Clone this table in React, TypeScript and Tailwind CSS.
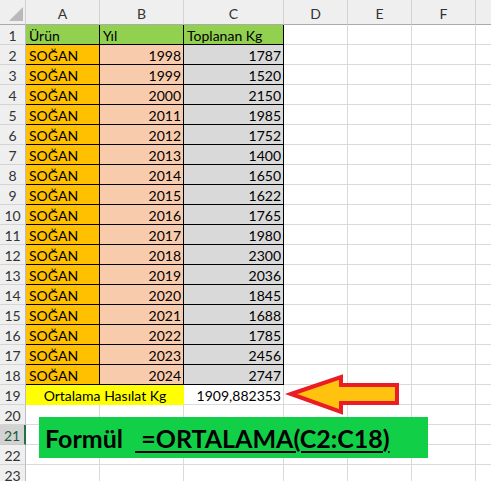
import React from "react";

const rows: [number, number, number][] = [
  [2, 1998, 1787],
  [3, 1999, 1520],
  [4, 2000, 2150],
  [5, 2011, 1985],
  [6, 2012, 1752],
  [7, 2013, 1400],
  [8, 2014, 1650],
  [9, 2015, 1622],
  [10, 2016, 1765],
  [11, 2017, 1980],
  [12, 2018, 2300],
  [13, 2019, 2036],
  [14, 2020, 1845],
  [15, 2021, 1688],
  [16, 2022, 1785],
  [17, 2023, 2456],
  [18, 2024, 2747],
];

function RowHead({ n, selected }: { n: number; selected?: boolean }) {
  return (
    <div
      className={
        selected
          ? "w-[26px] h-[20px] shrink-0 bg-[#d2d2d2] border-b border-b-[#c8c8c8] border-r-2 border-r-[#217346] text-[#1e5b3a] text-center leading-[21px]"
          : "w-[26px] h-[20px] shrink-0 bg-[#efefef] border-b border-b-[#d4d4d4] border-r border-r-[#bdbdbd] text-[#333] text-center leading-[21px]"
      }
    >
      {n}
    </div>
  );
}

function Empty({ w }: { w: string }) {
  return <div className={`${w} h-[20px] shrink-0 border-r border-b border-[#dadada]`} />;
}

function EmptyTail() {
  return (
    <>
      <Empty w="w-[64px]" />
      <Empty w="w-[64px]" />
      <Empty w="w-[64px]" />
      <Empty w="w-[30px]" />
    </>
  );
}

export default function App() {
  return (
    <div
      className="relative w-[491px] h-[481px] overflow-hidden bg-white text-[14px] text-black"
      style={{ fontFamily: "Lato, 'Noto Sans', sans-serif" }}
    >
      {/* column headers */}
      <div className="flex h-[25px]">
        <div className="relative w-[26px] h-[25px] shrink-0 bg-[#efefef] border-r border-r-[#d0d0d0] border-b border-b-[#ababab]">
          <div className="absolute right-[2px] bottom-[3px] w-0 h-0 border-l-[14px] border-l-transparent border-b-[14px] border-b-[#b9b9b9]" />
        </div>
        {[
          ["A", "w-[74px]"],
          ["B", "w-[84px]"],
          ["C", "w-[100px]"],
          ["D", "w-[64px]"],
          ["E", "w-[64px]"],
          ["F", "w-[64px]"],
          ["", "w-[30px]"],
        ].map(([l, w]) => (
          <div
            key={w + l}
            className={`${w} h-[25px] shrink-0 bg-[#efefef] border-r border-r-[#d4d4d4] border-b border-b-[#ababab] text-center text-[#333] leading-[27px]`}
          >
            {l}
          </div>
        ))}
      </div>

      {/* row 1 */}
      <div className="flex">
        <RowHead n={1} />
        <div className="w-[74px] h-[20px] shrink-0 bg-[#92d050] border-r border-b border-black pl-[3px] leading-[21px]">Ürün</div>
        <div className="w-[84px] h-[20px] shrink-0 bg-[#92d050] border-r border-b border-black pl-[3px] leading-[21px]">Yıl</div>
        <div className="w-[100px] h-[20px] shrink-0 bg-[#92d050] border-r border-b border-black pl-[3px] leading-[21px]">Toplanan Kg</div>
        <EmptyTail />
      </div>

      {rows.map(([n, y, kg]) => (
        <div key={n} className="flex">
          <RowHead n={n} />
          <div className="w-[74px] h-[20px] shrink-0 bg-[#ffc000] border-r border-b border-black pl-[3px] leading-[21px]">SOĞAN</div>
          <div className="w-[84px] h-[20px] shrink-0 bg-[#f8cbad] border-r border-b border-black pr-[2px] text-right leading-[21px]">{y}</div>
          <div className="w-[100px] h-[20px] shrink-0 bg-[#d9d9d9] border-r border-b border-black pr-[2px] text-right leading-[21px]">{kg}</div>
          <EmptyTail />
        </div>
      ))}

      {/* row 19 */}
      <div className="flex">
        <RowHead n={19} />
        <div className="w-[158px] h-[20px] shrink-0 bg-[#ffff00] text-center leading-[21px]">Ortalama Hasılat Kg</div>
        <div className="w-[100px] h-[20px] shrink-0 border-r border-b border-[#dadada] pr-[2px] text-right leading-[21px]">1909,882353</div>
        <EmptyTail />
      </div>

      {[20, 21, 22, 23].map((n) => (
        <div key={n} className="flex">
          <RowHead n={n} selected={n === 21} />
          <Empty w="w-[74px]" />
          <Empty w="w-[84px]" />
          <Empty w="w-[100px]" />
          <EmptyTail />
        </div>
      ))}

      {/* arrow */}
      <svg className="absolute left-[280px] top-[370px]" width="125" height="50" viewBox="280 370 125 50">
        <polygon
          points="291,394 341,377 341,385 397,385 397,403 341,403 341,412"
          fill="#ffc20e"
          stroke="#ec1c24"
          strokeWidth="4"
          strokeLinejoin="miter"
          strokeMiterlimit="6"
        />
      </svg>

      {/* formula box */}
      <div className="absolute left-[39px] top-[417px] w-[389px] h-[41px] bg-[#12cf48] pl-[6px] pt-[2px] flex items-center font-bold text-[25px] leading-none whitespace-pre">
        <span>Formül  </span>
        <span className="underline decoration-[2px] underline-offset-[3px]"> =ORTALAMA(C2:C18)</span>
      </div>
    </div>
  );
}
